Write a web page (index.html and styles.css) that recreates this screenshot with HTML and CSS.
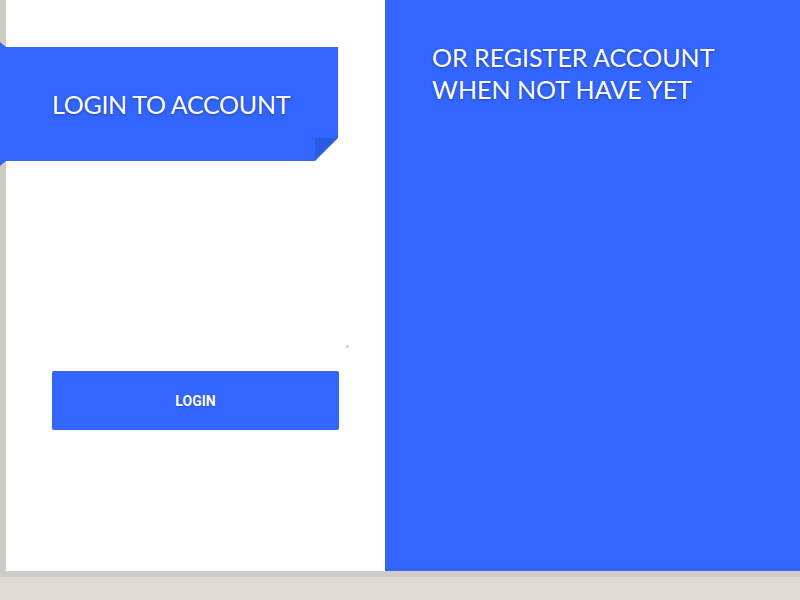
FILE: index.html
```html
<!DOCTYPE html>
<html>
<head>
<meta charset="utf-8">
<link rel="stylesheet" href="styles.css">
</head>
<body>
<div class="card">
  <section class="login">
    <div class="ribbon-wrap">
      <div class="ribbon"><h1 class="ribbon-title">LOGIN TO ACCOUNT</h1></div>
    </div>
    <div class="fields"><span class="grip"></span></div>
    <button class="btn">LOGIN</button>
  </section>
  <section class="register">
    <h2 class="register-title">OR REGISTER ACCOUNT<br>WHEN NOT HAVE YET</h2>
  </section>
</div>
</body>
</html>
```
FILE: styles.css
```css
html, body { margin: 0; padding: 0; }
body {
  background: #dfdbd6;
  width: 800px;
  height: 600px;
  overflow: hidden;
  font-family: Lato, "Open Sans", sans-serif;
}
.card {
  display: flex;
  margin-left: 6px;
  height: 571px;
  box-shadow: 0 0 0 6px #cfcbc6;
  background: #fff;
}
.login {
  width: 379px;
  background: #fff;
  display: flex;
  flex-direction: column;
}
.ribbon-wrap {
  position: relative;
  margin: 47px 0 0 -6px;
  width: 338px;
}
.ribbon-wrap::before,
.ribbon-wrap::after {
  content: "";
  position: absolute;
  left: 0;
  width: 6px;
  height: 5px;
  background: #3a62e6;
}
.ribbon-wrap::before {
  top: -5px;
  clip-path: polygon(0 0, 0 100%, 100% 100%);
}
.ribbon-wrap::after {
  bottom: -5px;
  clip-path: polygon(0 0, 100% 0, 0 100%);
}
.ribbon {
  position: relative;
  width: 338px;
  height: 114px;
  background: #3366ff;
  clip-path: polygon(0 0, 100% 0, 100% 91px, 315px 100%, 0 100%);
  display: flex;
  align-items: center;
}
.ribbon::after {
  content: "";
  position: absolute;
  left: 315px;
  top: 91px;
  width: 23px;
  height: 23px;
  background: linear-gradient(135deg, #2c5be3 50%, transparent 50%);
}
.ribbon-title {
  margin: 0 0 0 52px;
  color: #fff;
  font-weight: 400;
  font-size: 25px;
  letter-spacing: -0.3px;
  text-shadow: 0 1px 3px rgba(0,0,0,0.35);
}
.fields {
  position: relative;
  height: 210px;
}
.grip {
  position: absolute;
  left: 340px;
  top: 184px;
  width: 3px;
  height: 3px;
  background: #d8d8d8;
}
.btn {
  margin-left: 46px;
  width: 287px;
  height: 59px;
  border: 0;
  border-radius: 2px;
  background: #3366ff;
  color: #fff;
  font-family: Roboto, sans-serif;
  font-weight: 700;
  font-size: 14px;
  padding: 0;
  text-shadow: 0 1px 2px rgba(0,0,0,0.2);
}
.register {
  flex: 1;
  background: #3366ff;
  padding: 41px 0 0 47px;
}
.register-title {
  margin: 0;
  color: #fff;
  font-weight: 400;
  font-size: 25px;
  line-height: 32px;
  letter-spacing: 0;
  text-shadow: 0 1px 3px rgba(0,0,0,0.35);
}
```
